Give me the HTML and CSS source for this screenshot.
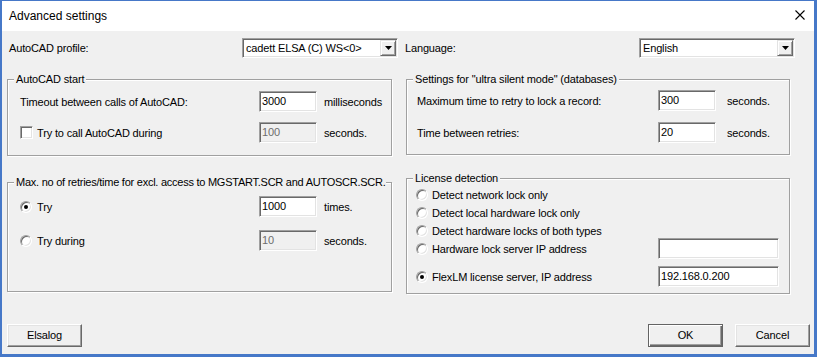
FILE: index.html
```html
<!DOCTYPE html>
<html>
<head>
<meta charset="utf-8">
<link rel="stylesheet" href="styles.css">
</head>
<body>
<div class="window">
  <div class="titlebar">
    <span class="title">Advanced settings</span>
    <svg class="close" width="10" height="10" viewBox="0 0 10 10"><path d="M0.5 0.5 L9.5 9.5 M9.5 0.5 L0.5 9.5" stroke="#000" stroke-width="1.1" fill="none"/></svg>
  </div>
  <div class="body">
    <div class="toprow">
      <span class="lbl-profile">AutoCAD profile:</span>
      <div class="combo">
        <span class="combo-text">cadett ELSA (C) WS&lt;0&gt;</span>
        <span class="combo-btn"><svg width="7" height="4" viewBox="0 0 7 4"><path d="M0 0 H7 L3.5 4 Z" fill="#000"/></svg></span>
      </div>
      <span class="lbl-lang">Language:</span>
      <div class="combo">
        <span class="combo-text">English</span>
        <span class="combo-btn"><svg width="7" height="4" viewBox="0 0 7 4"><path d="M0 0 H7 L3.5 4 Z" fill="#000"/></svg></span>
      </div>
    </div>

    <div class="midrow">
      <div class="group g1">
        <span class="legend">AutoCAD start</span>
        <div class="row">
          <span class="field f1">Timeout between calls of AutoCAD:</span>
          <span class="edit">3000</span>
          <span class="unit u1">milliseconds</span>
        </div>
        <div class="row row-gap1">
          <span class="field f1"><span class="check"></span>Try to call AutoCAD during</span>
          <span class="edit disabled">100</span>
          <span class="unit u1">seconds.</span>
        </div>
      </div>
      <div class="group g2">
        <span class="legend">Settings for "ultra silent mode" (databases)</span>
        <div class="row">
          <span class="field f2">Maximum time to retry to lock a record:</span>
          <span class="edit">300</span>
          <span class="unit u2">seconds.</span>
        </div>
        <div class="row row-gap2">
          <span class="field f2">Time between retries:</span>
          <span class="edit">20</span>
          <span class="unit u2">seconds.</span>
        </div>
      </div>
    </div>

    <div class="lowrow">
      <div class="group g3">
        <span class="legend tight">Max. no of retries/time for excl. access to MGSTART.SCR and AUTOSCR.SCR.</span>
        <div class="row">
          <span class="field f1"><span class="radio checked"></span>Try</span>
          <span class="edit">1000</span>
          <span class="unit u1">times.</span>
        </div>
        <div class="row row-gap3">
          <span class="field f1"><span class="radio"></span>Try during</span>
          <span class="edit disabled">10</span>
          <span class="unit u1">seconds.</span>
        </div>
      </div>
      <div class="group g4">
        <span class="legend">License detection</span>
        <div class="opt"><span class="radio"></span>Detect network lock only</div>
        <div class="opt"><span class="radio"></span>Detect local hardware lock only</div>
        <div class="opt"><span class="radio"></span>Detect hardware locks of both types</div>
        <div class="row opt4">
          <span class="field f4"><span class="radio"></span>Hardware lock server IP address</span>
          <span class="edit wide"></span>
        </div>
        <div class="row opt5">
          <span class="field f4"><span class="radio checked"></span>FlexLM license server, IP address</span>
          <span class="edit wide">192.168.0.200</span>
        </div>
      </div>
    </div>

    <div class="buttons">
      <span class="btn">Elsalog</span>
      <span class="spacer"></span>
      <span class="btn default">OK</span>
      <span class="btn">Cancel</span>
    </div>
  </div>
</div>
</body>
</html>
```

FILE: styles.css
```css
* { box-sizing: border-box; }
html, body { margin: 0; padding: 0; background: #ffffff; }
body {
  font-family: "Liberation Sans", Arial, sans-serif;
  font-size: 11px;
  letter-spacing: -0.15px;
  color: #000;
}
.window {
  width: 817px;
  height: 357px;
  border-style: solid;
  border-color: #4678c8;
  border-width: 1px 3px 3px 2px;
  display: flex;
  flex-direction: column;
}
.titlebar {
  height: 30px;
  background: #fff;
  display: flex;
  align-items: center;
  justify-content: space-between;
  padding: 0 9px 1px 7px;
}
.title { font-size: 12px; letter-spacing: 0; }
.close { display: block; margin-top: -1px; }

.body {
  height: 323px;
  background: #f0f0f0;
  padding: 7px 4px 7px 5px;
  display: flex;
  flex-direction: column;
}

/* top row */
.toprow {
  height: 20px;
  display: flex;
  align-items: center;
}
.lbl-profile { width: 235px; padding-left: 2px; }
.lbl-lang { width: 234px; margin-left: 7px; }
.combo {
  width: 156px;
  height: 20px;
  background: #fff;
  border: 1px solid;
  border-color: #a0a0a0 #fff #fff #a0a0a0;
  box-shadow: inset 1px 1px 0 #696969, inset -1px -1px 0 #e3e3e3;
  display: flex;
  align-items: center;
  padding: 1px;
}
.combo-text { flex: 1; padding-left: 2px; }
.combo-btn {
  width: 16px;
  height: 16px;
  background: #f0f0f0;
  border: 1px solid;
  border-color: #e3e3e3 #696969 #696969 #e3e3e3;
  box-shadow: inset 1px 1px 0 #fff, inset -1px -1px 0 #a0a0a0;
  display: flex;
  align-items: center;
  justify-content: center;
}
.combo-btn svg { display: block; margin-left: 1px; }

/* groups */
.midrow {
  margin-top: 21px;
  height: 77px;
  display: flex;
  align-items: flex-start;
  gap: 14px;
}
.lowrow {
  margin-top: 22px;
  height: 116px;
  display: flex;
  align-items: flex-start;
  gap: 14px;
}
.group {
  position: relative;
  border: 1px solid #a0a0a0;
  box-shadow: inset 1px 1px 0 #fff, 1px 1px 0 #fff;
}
.legend {
  position: absolute;
  top: -7px;
  left: 6px;
  line-height: 13px;
  padding: 0 2px;
  background: #f0f0f0;
  white-space: nowrap;
}
.legend.tight { letter-spacing: -0.25px; padding-right: 0; }

.g1 { width: 385px; height: 77px; padding: 11px 0 0 12px; }
.g2 { width: 384px; height: 76px; padding: 10px 0 0 10px; }
.g3 { width: 385px; height: 110px; margin-top: 4px; padding: 13px 0 0 12px; }
.g4 { width: 384px; height: 116px; padding: 7px 0 0 9px; }

.row {
  display: flex;
  align-items: center;
  height: 21px;
}
.row-gap1 { margin-top: 10px; }
.row-gap2 { margin-top: 11px; }
.row-gap3 { margin-top: 13px; }

.field {
  display: flex;
  align-items: center;
  white-space: nowrap;
}
.f1 { width: 239px; }
.f2 { width: 241px; }
.f4 { width: 242px; }

.unit { white-space: nowrap; }
.u1 { margin-left: 7px; }
.u2 { margin-left: 11px; }

.edit {
  width: 58px;
  height: 21px;
  background: #fff;
  border: 1px solid;
  border-color: #a0a0a0 #fff #fff #a0a0a0;
  box-shadow: inset 1px 1px 0 #696969, inset -1px -1px 0 #e3e3e3;
  padding: 0 2px 1px 2px;
  display: flex;
  align-items: center;
}
.edit.wide { width: 121px; }
.edit.disabled { background: #f0f0f0; color: #6d6d6d; }

.check {
  width: 13px;
  height: 13px;
  margin-right: 4px;
  background: #fff;
  border: 1px solid;
  border-color: #a0a0a0 #fff #fff #a0a0a0;
  box-shadow: inset 1px 1px 0 #696969, inset -1px -1px 0 #e3e3e3;
  flex: none;
}

.radio {
  position: relative;
  width: 12px;
  height: 12px;
  margin-right: 5px;
  border-radius: 50%;
  background: #fff;
  border: 1px solid;
  border-color: #a0a0a0 #fff #fff #a0a0a0;
  box-shadow: inset 1px 1px 0 #696969, inset -1px -1px 0 #e3e3e3;
  flex: none;
}
.radio.checked::after {
  content: "";
  position: absolute;
  left: 3px;
  top: 3px;
  width: 4px;
  height: 4px;
  border-radius: 50%;
  background: #000;
}
.opt {
  height: 18px;
  display: flex;
  align-items: center;
  white-space: nowrap;
}
.g4 .radio { margin-right: 4px; }
.opt4 { margin-top: -2px; }
.opt5 { margin-top: 7px; }

/* buttons */
.buttons {
  margin-top: auto;
  height: 23px;
  display: flex;
  gap: 12px;
}
.spacer { flex: 1; }
.btn {
  width: 75px;
  height: 23px;
  background: #f0f0f0;
  border: 1px solid;
  border-color: #fff #696969 #696969 #fff;
  box-shadow: inset -1px -1px 0 #a0a0a0, inset 1px 1px 0 #e3e3e3;
  display: flex;
  align-items: center;
  justify-content: center;
  padding-bottom: 1px;
}
.btn.default {
  border: 1px solid #646464;
  box-shadow: inset 1px 1px 0 #fff, inset -1px -1px 0 #696969, inset -2px -2px 0 #a0a0a0;
}
```
